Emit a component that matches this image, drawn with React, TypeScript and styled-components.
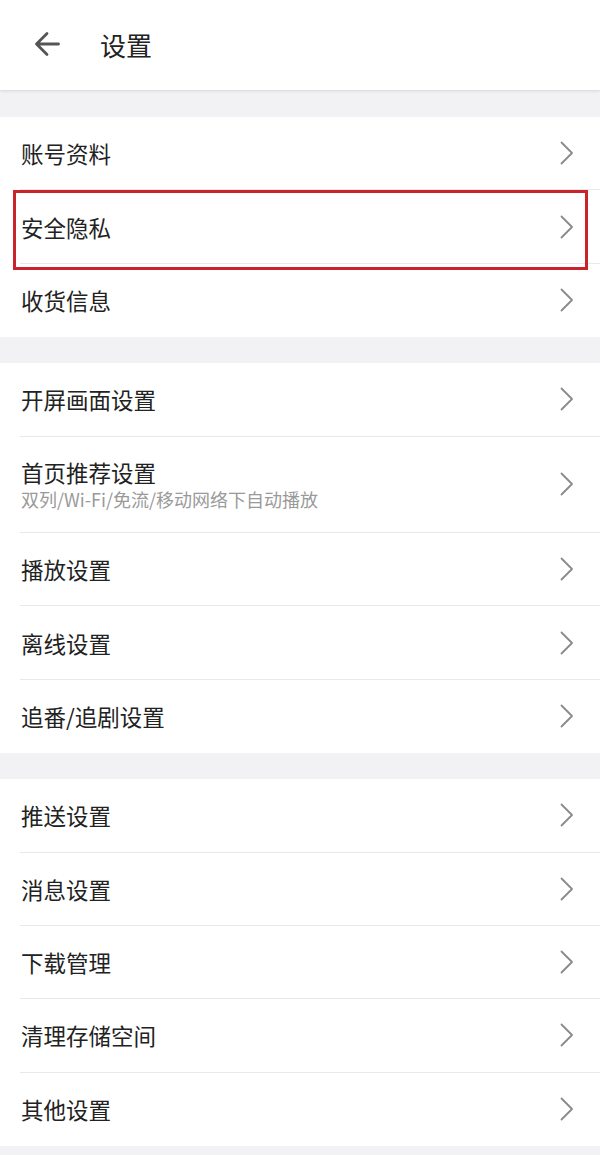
import React from "react";
import styled, { createGlobalStyle } from "styled-components";

const GlobalStyle = createGlobalStyle`
  html, body {
    margin: 0;
    padding: 0;
    background: #f2f2f4;
  }
  body {
    font-family: "Noto Sans CJK SC", "Noto Sans", sans-serif;
    -webkit-font-smoothing: antialiased;
  }
`;

const Page = styled.div`
  width: 600px;
  min-height: 1155px;
  background: #f2f2f4;
  display: flex;
  flex-direction: column;
`;

const Header = styled.div`
  height: 90px;
  background: #fff;
  display: flex;
  align-items: center;
  box-shadow: 0 1px 3px rgba(0, 0, 0, 0.12);
  position: relative;
  z-index: 1;
`;

const BackButton = styled.div`
  width: 26px;
  height: 26px;
  margin-left: 34px;
  margin-top: -2px;
  display: flex;
`;

const Title = styled.div`
  margin-left: 40px;
  font-size: 26px;
  color: #222;
  margin-top: -2px;
`;

const Group = styled.div<{ $gap: number }>`
  margin-top: ${(p) => p.$gap}px;
  background: #fff;
`;

const Row = styled.div<{ $tall?: boolean; $last?: boolean }>`
  position: relative;
  height: ${(p) => (p.$tall ? 96.4 : 73.4)}px;
  margin-left: 20px;
  padding-left: 1px;
  padding-right: 26px;
  display: flex;
  align-items: center;
  box-sizing: border-box;
  border-bottom: ${(p) => (p.$last ? "none" : "1px solid #e8e8ea")};
`;

const Texts = styled.div`
  flex: 1;
  display: flex;
  flex-direction: column;
`;

const Label = styled.div`
  font-size: 22.5px;
  color: #222;
  line-height: 30px;
`;

const Sub = styled.div`
  font-size: 18px;
  color: #9a9a9a;
  line-height: 24px;
`;

const Highlight = styled.div`
  position: absolute;
  left: -7px;
  right: 12px;
  top: 0;
  bottom: -7px;
  border: 3px solid #c9242b;
  box-sizing: border-box;
  pointer-events: none;
`;

const Chevron = () => (
  <svg width="14" height="24" viewBox="0 0 14 24">
    <path d="M1.5 1.5 L12 12 L1.5 22.5" fill="none" stroke="#8a8a8a" strokeWidth="1.8" strokeLinecap="round" strokeLinejoin="round" />
  </svg>
);

type Item = { label: string; sub?: string; mark?: boolean };

const groups: Item[][] = [
  [{ label: "账号资料" }, { label: "安全隐私", mark: true }, { label: "收货信息" }],
  [
    { label: "开屏画面设置" },
    { label: "首页推荐设置", sub: "双列/Wi-Fi/免流/移动网络下自动播放" },
    { label: "播放设置" },
    { label: "离线设置" },
    { label: "追番/追剧设置" },
  ],
  [
    { label: "推送设置" },
    { label: "消息设置" },
    { label: "下载管理" },
    { label: "清理存储空间" },
    { label: "其他设置" },
  ],
];

export default function App() {
  return (
    <Page>
      <GlobalStyle />
      <Header>
        <BackButton>
          <svg width="26" height="26" viewBox="0 0 26 26">
            <path d="M24.5 13 H2.5 M13 2.5 L2.5 13 L13 23.5" fill="none" stroke="#555" strokeWidth="2.8" strokeLinecap="round" strokeLinejoin="round" />
          </svg>
        </BackButton>
        <Title>设置</Title>
      </Header>
      {groups.map((g, gi) => (
        <Group key={gi} $gap={gi === 0 ? 27 : 26}>
          {g.map((it, i) => (
            <Row key={it.label} $tall={!!it.sub} $last={i === g.length - 1}>
              <Texts>
                <Label>{it.label}</Label>
                {it.sub && <Sub>{it.sub}</Sub>}
              </Texts>
              <Chevron />
              {it.mark && <Highlight />}
            </Row>
          ))}
        </Group>
      ))}
    </Page>
  );
}
